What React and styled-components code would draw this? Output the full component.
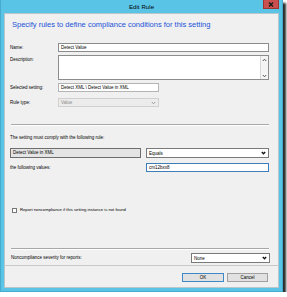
import React from 'react'
import styled, {createGlobalStyle} from 'styled-components'

const GlobalStyle = createGlobalStyle`
    html, body {
        margin: 0;
        padding: 0;
        background: #ffffff;
    }
    body {
        font-family: "Liberation Sans", Arial, sans-serif;
    }
`;

const Chevron = ({up, color = "#444", width = 1}) => (
    <svg width="5" height="4" viewBox="0 0 5 4">
        <path
            d={up ? "M0.8 3 L2.5 1.2 L4.2 3" : "M0.8 1 L2.5 2.8 L4.2 1"}
            fill="none"
            stroke={color}
            strokeWidth={width}
        />
    </svg>
);

export default function App() {
    return (
        <>
            <GlobalStyle/>
            <Window>
                <TitleBar>
                    <span/>
                    <Title>Edit Rule</Title>
                    <CloseButton>
                        <svg width="6" height="5" viewBox="0 0 6 5">
                            <path d="M1 0.5 L5 4.5 M5 0.5 L1 4.5" stroke="#1b1b1b" strokeWidth="1.4"/>
                        </svg>
                    </CloseButton>
                </TitleBar>
                <Content>
                    <Heading>Specify rules to define compliance conditions for this setting</Heading>
                    <Body>
                        <FieldRow top={14}>
                            <Label>Name:</Label>
                            <TextBox>Detect Value</TextBox>
                        </FieldRow>
                        <FieldRow top={3}>
                            <Label>Description:</Label>
                            <TextArea>
                                <span/>
                                <ScrollBar>
                                    <ScrollArrow><Chevron up color="#555"/></ScrollArrow>
                                    <ScrollArrow><Chevron color="#555"/></ScrollArrow>
                                </ScrollBar>
                            </TextArea>
                        </FieldRow>
                        <FieldRow top={3}>
                            <Label>Selected setting:</Label>
                            <TextBox width={101} readOnly>Detect XML \ Detect Value in XML</TextBox>
                        </FieldRow>
                        <FieldRow top={6}>
                            <Label>Rule type:</Label>
                            <Select width={101} disabled>
                                <span>Value</span>
                                <Chevron color="#9a9a9a"/>
                            </Select>
                        </FieldRow>

                        <Separator top={17}/>

                        <Text top={9}>The setting must comply with the following rule:</Text>

                        <RuleRow top={7}>
                            <RuleName>Detect Value in XML</RuleName>
                            <Select dark>
                                <span>Equals</span>
                                <Chevron color="#111" width={1.3}/>
                            </Select>
                        </RuleRow>
                        <RuleRow top={5}>
                            <Text>the following values:</Text>
                            <TextBox focused>cm12bxx8</TextBox>
                        </RuleRow>

                        <CheckRow top={35}>
                            <CheckBox/>
                            <Text narrow>Report noncompliance if this setting instance is not found</Text>
                        </CheckRow>

                        <Separator top={35}/>

                        <SeverityRow top={3}>
                            <Text>Noncompliance severity for reports:</Text>
                            <Select width={79} dark>
                                <span>None</span>
                                <Chevron color="#111" width={1.3}/>
                            </Select>
                        </SeverityRow>
                    </Body>
                    <Footer>
                        <Button primary>OK</Button>
                        <Button>Cancel</Button>
                    </Footer>
                </Content>
            </Window>
        </>
    );
}

const Window = styled.div`
    width: 283px;
    height: 292px;
    box-sizing: border-box;
    padding: 0 3px 3px 3px;
    background: #5ac4e6;
    border: 1px solid #45acd0;
    border-top: none;
    box-shadow: 3px 3px 2px rgba(20, 20, 20, 0.9);
    display: flex;
    flex-direction: column;
`;

const TitleBar = styled.div`
    height: 13px;
    display: grid;
    grid-template-columns: 1fr auto 1fr;
    align-items: start;
`;

const Title = styled.div`
    font-family: "Liberation Sans", Arial, sans-serif;
    font-size: 6px;
    line-height: 6px;
    margin-top: 4px;
    color: #000;
    letter-spacing: 0.1px;
`;

const CloseButton = styled.div`
    justify-self: end;
    width: 16px;
    height: 9px;
    box-sizing: border-box;
    background: #c9504e;
    border: 1px solid #9e3532;
    border-top: none;
    display: flex;
    align-items: center;
    justify-content: center;
`;

const Content = styled.div`
    flex: 1;
    background: #f0f0f0;
    border: 1px solid #b9c6cc;
    display: flex;
    flex-direction: column;
    min-height: 0;
`;

const Heading = styled.div`
    margin: 7px 0 0 7px;
    font-size: 7.5px;
    line-height: 8px;
    color: #1a52d8;
    white-space: nowrap;
`;

const Body = styled.div`
    padding: 0 9px 0 5px;
    display: flex;
    flex-direction: column;
`;

const FieldRow = styled.div`
    display: grid;
    grid-template-columns: 48px 1fr;
    align-items: start;
    margin-top: ${props => props.top || 0}px;
`;

const Label = styled.div`
    font-size: 4.5px;
    line-height: 6px;
    padding-top: 2px;
    color: #000;
    white-space: nowrap;
`;

const Text = styled.div`
    font-size: ${props => props.narrow ? 4.2 : 4.5}px;
    line-height: 6px;
    color: #000;
    white-space: nowrap;
    margin-top: ${props => props.top || 0}px;
`;

const TextBox = styled.div`
    height: 9px;
    box-sizing: border-box;
    width: ${props => props.width ? props.width + "px" : "auto"};
    background: #ffffff;
    border: 1px solid ${props => props.focused ? "#3d7eb8" : props.readOnly ? "#b4b4b4" : "#8c8c8c"};
    font-size: 4.5px;
    line-height: 7px;
    padding-left: 2px;
    color: #000;
    white-space: nowrap;
    overflow: hidden;
`;

const TextArea = styled.div`
    height: 25px;
    box-sizing: border-box;
    background: #ffffff;
    border: 1px solid #8c8c8c;
    display: grid;
    grid-template-columns: 1fr 8px;
`;

const ScrollBar = styled.div`
    border-left: 1px solid #d8d8d8;
    background: #f4f4f4;
    display: flex;
    flex-direction: column;
    justify-content: space-between;
`;

const ScrollArrow = styled.div`
    height: 7px;
    display: flex;
    align-items: center;
    justify-content: center;
`;

const Select = styled.div`
    height: ${props => props.dark ? 10 : 9}px;
    box-sizing: border-box;
    width: ${props => props.width ? props.width + "px" : "auto"};
    background: ${props => props.disabled ? "#ececec" : "#ffffff"};
    border: 1px solid ${props => props.disabled ? "#d0d0d0" : "#7a7a7a"};
    font-size: 4.5px;
    line-height: 7px;
    padding: 0 2px;
    color: ${props => props.disabled ? "#8a8a8a" : "#000"};
    display: flex;
    align-items: center;
    justify-content: space-between;
    white-space: nowrap;
`;

const Separator = styled.div`
    height: 1px;
    background: #a8a8a8;
    border-bottom: 1px solid #ffffff;
    margin-top: ${props => props.top || 0}px;
    margin-left: 1px;
`;

const RuleRow = styled.div`
    display: grid;
    grid-template-columns: 131px 1fr;
    column-gap: 5px;
    align-items: center;
    margin-top: ${props => props.top || 0}px;
`;

const RuleName = styled.div`
    height: 10px;
    box-sizing: border-box;
    background: #e4e4e4;
    border: 1px solid #6e6e6e;
    font-size: 4.5px;
    line-height: 8px;
    padding-left: 2px;
    color: #000;
    white-space: nowrap;
`;

const CheckRow = styled.div`
    display: flex;
    align-items: center;
    gap: 3px;
    padding-left: 2px;
    margin-top: ${props => props.top || 0}px;
`;

const CheckBox = styled.div`
    width: 5px;
    height: 5px;
    box-sizing: border-box;
    background: #ffffff;
    border: 1px solid #777777;
`;

const SeverityRow = styled.div`
    display: flex;
    align-items: center;
    justify-content: space-between;
    padding-left: 1px;
    margin-right: -1px;
    margin-top: ${props => props.top || 0}px;
`;

const Footer = styled.div`
    margin-top: auto;
    border-top: 1px solid #c9c9c9;
    padding: 7px 10px 5px 0;
    display: flex;
    justify-content: flex-end;
    gap: 3px;
`;

const Button = styled.div`
    width: ${props => props.primary ? 42 : 41}px;
    height: 9px;
    box-sizing: border-box;
    background: #e1e1e1;
    border: 1px solid ${props => props.primary ? "#3c88c8" : "#a0a0a0"};
    font-size: 4.5px;
    line-height: 7px;
    text-align: center;
    color: #000;
`;
